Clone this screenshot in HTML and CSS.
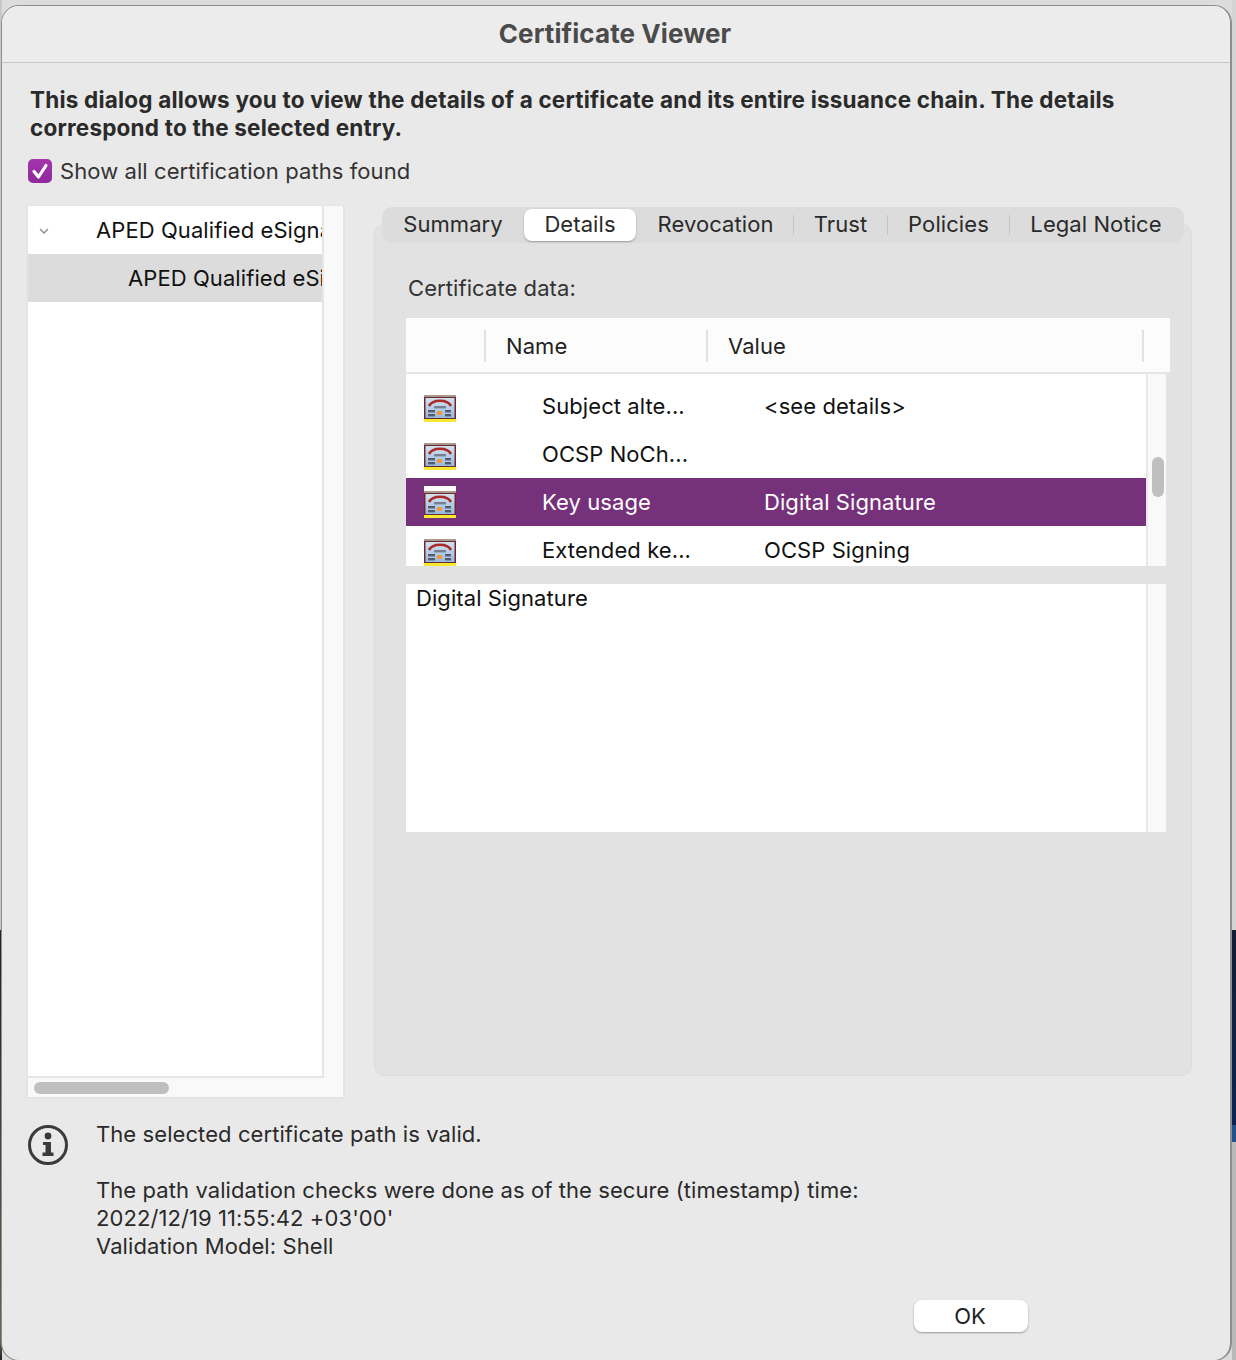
FILE: index.html
```html
<!DOCTYPE html>
<html>

    <head>
        <title>Certificate Viewer</title>
        <link rel="stylesheet" href="styles.css">
    </head>

    <body>
        <svg class="defs" width="0" height="0">
            <defs>
                <linearGradient id="certFondo" x1="0" y1="0" x2="0" y2="1">
                    <stop offset="0" stop-color="#d5e1f1"/>
                    <stop offset="1" stop-color="#98b8e0"/>
                </linearGradient>
            </defs>
            <symbol id="certIcon" viewBox="0 0 32 27">
                <rect x="0" y="0" width="32" height="2" fill="#a8968f"/>
                <rect x="0" y="2" width="32" height="22" fill="#6e2a2a"/>
                <rect x="1.5" y="3" width="29" height="20" fill="url(#certFondo)"/>
                <path d="M5 11 C9 4 23 4 27 11" fill="none" stroke="#a82a24" stroke-width="2.6"/>
                <rect x="10" y="11" width="12" height="2.4" fill="#76818f"/>
                <rect x="4" y="15" width="7" height="2.4" fill="#545d69"/>
                <rect x="21" y="15" width="6" height="2.4" fill="#545d69"/>
                <rect x="4" y="19" width="7" height="2.4" fill="#545d69"/>
                <rect x="21" y="19" width="6" height="2.4" fill="#545d69"/>
                <rect x="13" y="16" width="5" height="4" fill="#ee9a3a"/>
                <rect x="0" y="24" width="32" height="3" fill="#f7e92f"/>
            </symbol>
        </svg>

        <div class="ventana">
            <div class="titulo">Certificate Viewer</div>

            <div class="contenido">
                <p class="intro">This dialog allows you to view the details of a certificate and its entire issuance chain. The details correspond to the selected entry.</p>

                <div class="check-fila">
                    <span class="check">
                        <svg width="24" height="24" viewBox="0 0 24 24">
                            <path d="M6 12.5 L10.5 18 L18 6.5" fill="none" stroke="#fff" stroke-width="3.2" stroke-linecap="round" stroke-linejoin="round"/>
                        </svg>
                    </span>
                    <span>Show all certification paths found</span>
                </div>

                <div class="principal">
                    <div class="arbol">
                        <div class="arbol-arriba">
                            <div class="arbol-lista">
                                <div class="arbol-fila">
                                    <svg class="chevron" width="10" height="6" viewBox="0 0 10 6">
                                        <path d="M1 1 L5 5 L9 1" fill="none" stroke="#8a8a8a" stroke-width="1.3"/>
                                    </svg>
                                    <span class="arbol-texto nivel-1">APED Qualified eSignature</span>
                                </div>
                                <div class="arbol-fila activo">
                                    <span class="arbol-texto nivel-2">APED Qualified eSignature</span>
                                </div>
                            </div>
                            <div class="arbol-barra-v"></div>
                        </div>
                        <div class="arbol-barra-h">
                            <div class="pulgar-h"></div>
                        </div>
                    </div>

                    <div class="derecha">
                        <div class="pestanas">
                            <div class="pestana p-summary">Summary</div>
                            <div class="pestana p-details activa">Details</div>
                            <div class="pestana p-revocation">Revocation</div>
                            <div class="separador"></div>
                            <div class="pestana p-trust">Trust</div>
                            <div class="separador"></div>
                            <div class="pestana p-policies">Policies</div>
                            <div class="separador"></div>
                            <div class="pestana p-legal">Legal Notice</div>
                        </div>

                        <div class="panel">
                            <div class="etiqueta">Certificate data:</div>

                            <div class="cabecera">
                                <div class="col-icono"></div>
                                <div class="col-cab col-nombre">Name</div>
                                <div class="col-cab col-valor">Value</div>
                                <div class="col-cab col-esquina"></div>
                            </div>

                            <div class="tabla-cuerpo">
                                <div class="filas">
                                    <div class="fila">
                                        <svg class="cert"><use href="#certIcon"/></svg>
                                        <span class="celda-nombre">Subject alte...</span>
                                        <span>&lt;see details&gt;</span>
                                    </div>
                                    <div class="fila">
                                        <svg class="cert"><use href="#certIcon"/></svg>
                                        <span class="celda-nombre">OCSP NoCh...</span>
                                    </div>
                                    <div class="fila seleccionada">
                                        <svg class="cert"><use href="#certIcon"/></svg>
                                        <span class="celda-nombre">Key usage</span>
                                        <span>Digital Signature</span>
                                    </div>
                                    <div class="fila">
                                        <svg class="cert"><use href="#certIcon"/></svg>
                                        <span class="celda-nombre">Extended ke...</span>
                                        <span>OCSP Signing</span>
                                    </div>
                                </div>
                                <div class="barra-v">
                                    <div class="pulgar-v"></div>
                                </div>
                            </div>

                            <div class="detalle">
                                <div class="detalle-texto">Digital Signature</div>
                                <div class="barra-v"></div>
                            </div>
                        </div>
                    </div>
                </div>

                <div class="estado">
                    <svg class="info" width="42" height="42" viewBox="0 0 42 42">
                        <circle cx="21" cy="21" r="18.5" fill="none" stroke="#3a3a3a" stroke-width="3"/>
                        <circle cx="21" cy="12" r="3.4" fill="#3a3a3a"/>
                        <path d="M16 18 H24 V28.5 H26.5 V32 H15.5 V28.5 H18.5 V21 H16 Z" fill="#3a3a3a"/>
                    </svg>
                    <div class="estado-texto">
                        The selected certificate path is valid.<br>
                        <br>
                        The path validation checks were done as of the secure (timestamp) time:<br>
                        2022/12/19 11:55:42 +03'00'<br>
                        Validation Model: Shell
                    </div>
                </div>

                <div class="pie">
                    <button class="btn-ok">OK</button>
                </div>
            </div>
        </div>
    </body>

</html>
```

FILE: styles.css
```css
html,
body {
    width: 100%;
    height: 100%;
    margin: 0;
    padding: 0;
    overflow: hidden;
}

body {
    font-family: Inter, "Liberation Sans", sans-serif;
    font-size: 22px;
    letter-spacing: 0.08px;
    color: #222;
    /* Restos del escritorio que asoman por los bordes */
    background-color: #dcdcdc;
    background-image:
        linear-gradient(to bottom, #c8c8c8 0, #c8c8c8 930px, #23221c 930px, #6b6350 1340px, #23221c 1360px),
        linear-gradient(to bottom, #d4d4d4 0, #d4d4d4 930px, #111c33 930px, #0b2453 1125px, #24508c 1125px, #24508c 1142px, #b9b9b9 1142px, #b9b9b9 1360px);
    background-size: 2px 100%, 4px 100%;
    background-position: left top, right top;
    background-repeat: no-repeat;
}

.defs {
    display: block;
    height: 0;
}

.ventana {
    box-sizing: border-box;
    width: 1231px;
    height: 1356px;
    margin: 5px 0 0 1px;
    background-color: #e9e9e9;
    border: 1px solid #8e8e8e;
    border-right-width: 2px;
    border-radius: 18px;
    overflow: hidden;
}

.titulo {
    height: 56px;
    padding-right: 2px;
    line-height: 55px;
    text-align: center;
    font-size: 26px;
    font-weight: 700;
    color: #4b4b4b;
    background-color: #ececec;
    border-bottom: 1px solid #c8c8c8;
}

.contenido {
    display: flex;
    flex-direction: column;
}

.intro {
    margin: 23px 90px 0 28px;
    font-size: 22.5px;
    font-weight: 700;
    letter-spacing: 0.2px;
    line-height: 28px;
    color: #2a2a2a;
}

.check-fila {
    display: flex;
    align-items: center;
    gap: 8px;
    height: 28px;
    margin: 15px 0 0 26px;
    line-height: 28px;
    color: #333;
}

.check {
    display: block;
    width: 24px;
    height: 24px;
    border-radius: 5px;
    background: linear-gradient(to bottom, #a534ad, #8f2a9b);
}

.check svg {
    display: block;
}

.principal {
    display: flex;
    gap: 29px;
    height: 894px;
    margin: 20px 0 0 24px;
}

/* Panel izquierdo */

.arbol {
    box-sizing: border-box;
    display: flex;
    flex-direction: column;
    width: 319px;
    height: 894px;
    background-color: #f9f9f9;
    border: 2px solid #e4e4e4;
    border-top-width: 1px;
}

.arbol-arriba {
    display: flex;
    height: 872px;
}

.arbol-lista {
    width: 294px;
    background-color: #fff;
    border-right: 2px solid #e6e6e6;
    border-bottom: 2px solid #e6e6e6;
    overflow: hidden;
}

.arbol-barra-v {
    flex-grow: 1;
}

.arbol-fila {
    position: relative;
    display: flex;
    align-items: center;
    height: 48px;
    white-space: nowrap;
    color: #111;
}

.arbol-fila.activo {
    background-color: #dcdcdc;
}

.chevron {
    position: absolute;
    left: 11px;
    top: 22px;
}

.nivel-1 {
    padding-left: 68px;
}

.nivel-2 {
    padding-left: 100px;
}

.arbol-barra-h {
    padding: 4px 0 0 6px;
}

.pulgar-h {
    width: 135px;
    height: 12px;
    background-color: #bfbfbf;
    border-radius: 6px;
}

/* Panel derecho */

.derecha {
    display: flex;
    flex-direction: column;
    width: 818px;
}

.pestanas {
    position: relative;
    z-index: 1;
    box-sizing: border-box;
    display: flex;
    align-items: center;
    width: 802px;
    height: 36px;
    margin: 2px 8px 0;
    background-color: #dcdcdc;
    border-radius: 10px;
    color: #2a2a2a;
}

.pestana {
    text-align: center;
    line-height: 30px;
    height: 32px;
}

.p-summary {
    width: 142px;
}

.p-details {
    width: 112px;
}

.p-revocation {
    width: 155px;
    padding-left: 2px;
}

.p-trust {
    width: 93px;
}

.p-policies {
    width: 121px;
}

.p-legal {
    width: 172px;
}

.pestana.activa {
    background-color: #fff;
    border-radius: 8px;
    box-shadow: 0 1px 2px rgba(0, 0, 0, 0.3);
}

.separador {
    width: 1px;
    height: 20px;
    background-color: #c4c4c4;
}

.panel {
    box-sizing: border-box;
    height: 852px;
    margin-top: -19px;
    padding: 49px 0 0 31px;
    background-color: #e2e2e2;
    border: 1px solid #dddddd;
    border-radius: 10px;
}

.etiqueta {
    height: 28px;
    line-height: 28px;
    margin: 0 0 16px 2px;
    color: #333;
}

.cabecera {
    box-sizing: border-box;
    display: flex;
    align-items: center;
    width: 764px;
    height: 56px;
    padding-top: 2px;
    background-color: #fcfcfc;
    border-bottom: 2px solid #e6e6e6;
}

.col-icono {
    width: 78px;
}

.col-cab {
    box-sizing: border-box;
    height: 32px;
    line-height: 32px;
    padding-left: 20px;
    border-left: 2px solid #e2e2e2;
}

.col-nombre {
    width: 222px;
}

.col-valor {
    width: 436px;
}

.col-esquina {
    flex-grow: 1;
}

.tabla-cuerpo {
    display: flex;
    width: 760px;
    height: 192px;
}

.filas {
    box-sizing: border-box;
    width: 740px;
    padding-top: 8px;
    background-color: #fff;
    overflow: hidden;
}

.fila {
    position: relative;
    display: flex;
    align-items: center;
    height: 48px;
    padding-left: 115px;
    white-space: nowrap;
    color: #111;
}

.fila.seleccionada {
    background-color: #753179;
    color: #fff;
}

.cert {
    position: absolute;
    left: 18px;
    top: 13px;
    width: 32px;
    height: 27px;
    filter: blur(0.4px);
}

.seleccionada .cert {
    top: 8px;
    padding-top: 5px;
    background-color: #fff;
}

.celda-nombre {
    width: 222px;
    flex-shrink: 0;
    padding-left: 21px;
}

.barra-v {
    box-sizing: border-box;
    width: 20px;
    padding: 83px 4px 0 4px;
    background-color: #f9f9f9;
    border-left: 2px solid #e8e8e8;
}

.pulgar-v {
    width: 12px;
    height: 40px;
    background-color: #bfbfbf;
    border-radius: 6px;
}

.detalle {
    display: flex;
    width: 760px;
    height: 248px;
    margin-top: 18px;
}

.detalle-texto {
    box-sizing: border-box;
    width: 740px;
    padding-left: 10px;
    line-height: 28px;
    background-color: #fff;
    color: #111;
}

/* Parte de abajo */

.estado {
    display: flex;
    margin: 21px 0 0 25px;
}

.info {
    flex-shrink: 0;
    margin-top: 4px;
}

.estado-texto {
    margin-left: 27px;
    line-height: 28px;
    color: #2a2a2a;
}

.pie {
    display: flex;
    justify-content: flex-end;
    margin: 40px 202px 0 0;
}

.btn-ok {
    width: 114px;
    height: 32px;
    padding: 0 2px 0 0;
    border: none;
    border-radius: 8px;
    background-color: #fff;
    box-shadow: 0 1px 2px rgba(0, 0, 0, 0.35);
    font-family: Inter, "Liberation Sans", sans-serif;
    font-size: 22px;
    color: #222;
}
```
